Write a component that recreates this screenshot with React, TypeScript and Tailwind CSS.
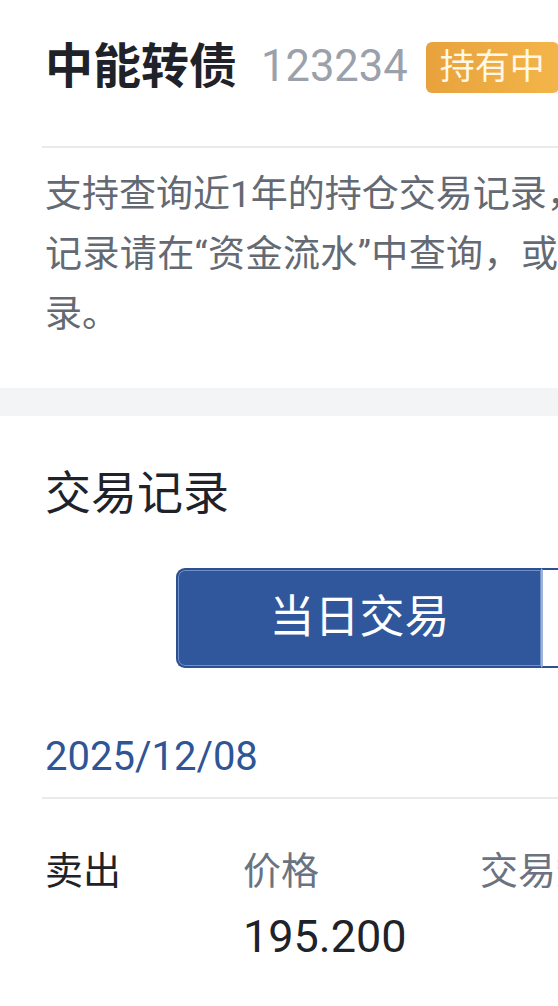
const font = { fontFamily: 'Roboto, "Noto Sans CJK SC", sans-serif' };

export default function App() {
  return (
    <div className="h-[1006px] w-[558px] overflow-hidden bg-white" style={font}>
      <div className="w-[1100px]">
        <section className="pl-[45px]">
          <div className="flex h-[134px] items-center">
            <h1 className="text-[48px] font-bold leading-none text-[#1f2329]">中能转债</h1>
            <span className="ml-[24px] text-[43.5px] leading-none text-[#9ba1ab]">123234</span>
            <span className="ml-[18px] flex h-[51px] items-center rounded-[6px] bg-gradient-to-r from-[#e8a23d] to-[#f3b549] px-[14px] text-[35px] leading-none text-[#fff8e6]">
              持有中
            </span>
          </div>
          <div className="-ml-[3px] mt-[12px] h-[2px] bg-[#e9eaec]" />
          <p className="pb-[43px] pt-[17px] text-[37px] leading-[60px] text-[#646a73]">
            <span className="block whitespace-nowrap">支持查询近1年的持仓交易记录，更早的交易</span>
            <span className="block whitespace-nowrap tracking-[0.4px]">记录请在“资金流水”中查询，或到对账单中查看记</span>
            <span className="block whitespace-nowrap">录。</span>
          </p>
        </section>

        <div className="h-[28px] bg-[#f3f4f6]" />

        <section className="pl-[45px]">
          <h2 className="pt-[47px] text-[46px] leading-[60px] text-[#1f2329]">交易记录</h2>

          <div className="ml-[131px] mt-[45px] flex h-[100px]">
            <div className="flex w-[365px] items-center justify-center rounded-l-[9px] border-2 border-r-0 border-[#2c5091] bg-[#30579c] shadow-[inset_0_0_0_1px_#6f8fc6] text-[45px] text-white">
              当日交易
            </div>
            <div className="flex w-[365px] items-center justify-center border-2 border-l-[#9fb3d6] border-[#2c5091] bg-white text-[45px] text-[#30579c]">
              历史交易
            </div>
          </div>

          <div className="pt-[64px] text-[40px] leading-[50px] text-[#2f5597]">2025/12/08</div>
          <div className="-ml-[3px] mt-[15px] h-[2px] bg-[#e9eaec]" />

          <div className="flex pt-[47px] text-[38px] leading-[50px]">
            <span className="w-[198px] text-[#1f2329]">卖出</span>
            <span className="w-[237px] text-[#6b7280]">价格</span>
            <span className="text-[#6b7280]">交易数量</span>
          </div>
          <div className="flex pt-[16px] text-[45px] leading-[50px] text-[#1f2329]">
            <span className="w-[198px]" />
            <span className="w-[237px]">195.200</span>
            <span className="w-[300px] text-right">10</span>
          </div>
        </section>
      </div>
    </div>
  );
}
